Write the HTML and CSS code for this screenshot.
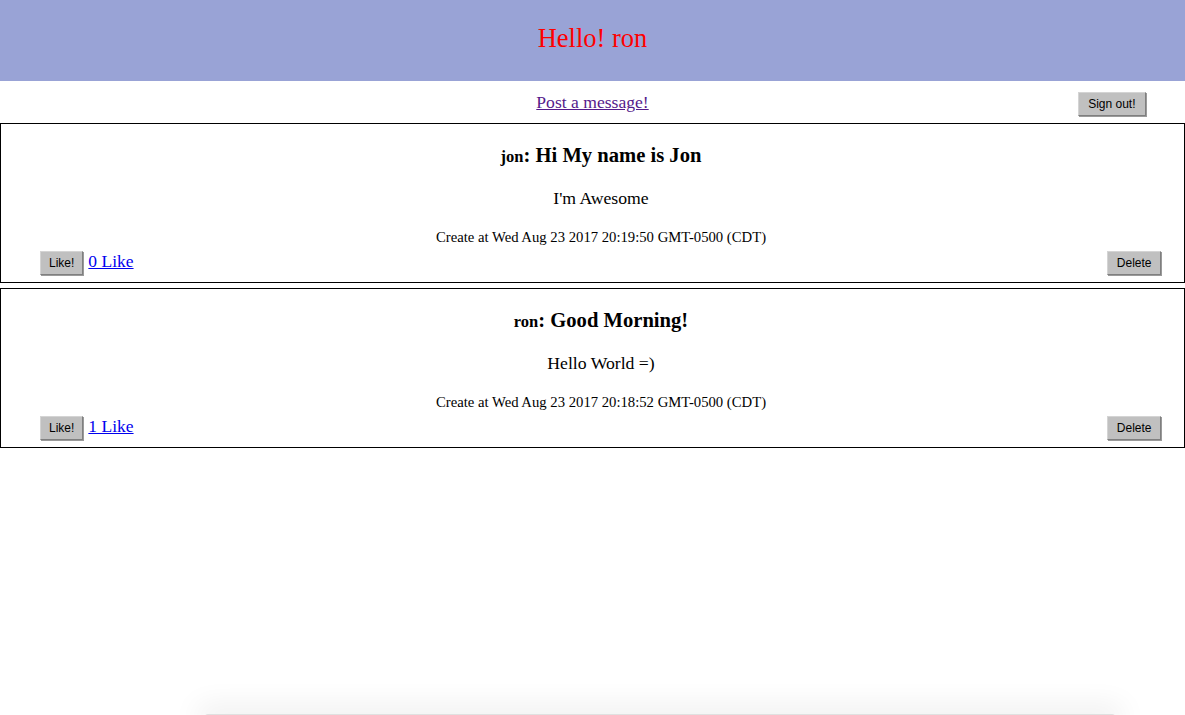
FILE: index.html
```html
<!DOCTYPE html>
<html>
<head>
<meta charset="utf-8">
<title>Messages</title>
<link rel="stylesheet" href="styles.css">
</head>
<body>
<header class="banner">
  <h1 class="greeting">Hello! ron</h1>
</header>
<nav class="toolbar">
  <a class="post-link" href="#post">Post a message!</a>
  <button class="btn signout">Sign out!</button>
</nav>
<main class="messages">
  <article class="card">
    <h2 class="title"><span class="author">jon</span>: Hi My name is Jon</h2>
    <p class="body">I'm Awesome</p>
    <p class="date">Create at Wed Aug 23 2017 20:19:50 GMT-0500 (CDT)</p>
    <div class="actions">
      <div class="like-group">
        <button class="btn">Like!</button>
        <a class="likes" href="#likes1">0 Like</a>
      </div>
      <button class="btn delete">Delete</button>
    </div>
  </article>
  <article class="card">
    <h2 class="title"><span class="author">ron</span>: Good Morning!</h2>
    <p class="body">Hello World =)</p>
    <p class="date">Create at Wed Aug 23 2017 20:18:52 GMT-0500 (CDT)</p>
    <div class="actions">
      <div class="like-group">
        <button class="btn">Like!</button>
        <a class="likes" href="#likes2">1 Like</a>
      </div>
      <button class="btn delete">Delete</button>
    </div>
  </article>
</main>
<div class="window-shadow"></div>
</body>
</html>
```

FILE: styles.css
```css
html, body {
  margin: 0;
  padding: 0;
  background: #ffffff;
  font-family: "Liberation Serif", "Times New Roman", serif;
  color: #000;
}

.banner {
  height: 81px;
  background: #99a3d6;
  display: flex;
  justify-content: center;
  align-items: flex-start;
}

.greeting {
  margin: 22px 0 0 0;
  font-size: 26.5px;
  line-height: 32px;
  font-weight: normal;
  color: #ff0000;
}

.toolbar {
  height: 42px;
  display: flex;
  justify-content: center;
  align-items: flex-start;
  position: relative;
}

.post-link {
  margin-top: 10px;
  font-size: 17.6px;
  line-height: 22px;
  color: #551a8b;
  text-decoration: underline;
}

.btn {
  font-family: "Liberation Sans", Arial, sans-serif;
  font-size: 12px;
  color: #000;
  background: #c0c0c0;
  height: 24px;
  padding: 0 8px;
  border: 1px solid;
  border-color: #d4d4d4 #7f7f7f #7f7f7f #d4d4d4;
  box-shadow: 1px 1px 0 #9a9a9a;
  border-radius: 0;
  cursor: pointer;
}

.btn.signout {
  position: absolute;
  right: 39px;
  top: 11px;
  padding: 0 9.5px;
}

.btn.delete {
  padding: 0 8.5px;
}

.messages {
  display: flex;
  flex-direction: column;
  gap: 5px;
}

.card {
  border: 1px solid #000;
  padding: 19px 23px 7px 39px;
  display: flex;
  flex-direction: column;
  align-items: stretch;
  text-align: center;
}

.title {
  margin: 0;
  font-size: 20.6px;
  line-height: 24px;
  font-weight: bold;
  padding-left: 1px;
}

.author {
  font-size: 16.5px;
}

.body {
  margin: 18px 0 0 0;
  font-size: 17.7px;
  line-height: 22px;
  padding-left: 1px;
}

.date {
  margin: 19px 0 0 0;
  font-size: 14.7px;
  line-height: 18px;
  padding-left: 1px;
}

.actions {
  margin-top: 5px;
  display: flex;
  justify-content: space-between;
  align-items: center;
  height: 24px;
}

.like-group {
  display: flex;
  align-items: center;
  gap: 5px;
}

.likes {
  font-size: 17.5px;
  line-height: 20px;
  color: #0000ee;
  text-decoration: underline;
  margin-top: -5px;
}

.window-shadow {
  position: fixed;
  left: 205px;
  right: 70px;
  bottom: -2px;
  height: 3px;
  background: #e0e0e0;
  box-shadow: 0 0 28px 8px rgba(0, 0, 0, 0.08);
  border-radius: 6px 6px 0 0;
}
```
